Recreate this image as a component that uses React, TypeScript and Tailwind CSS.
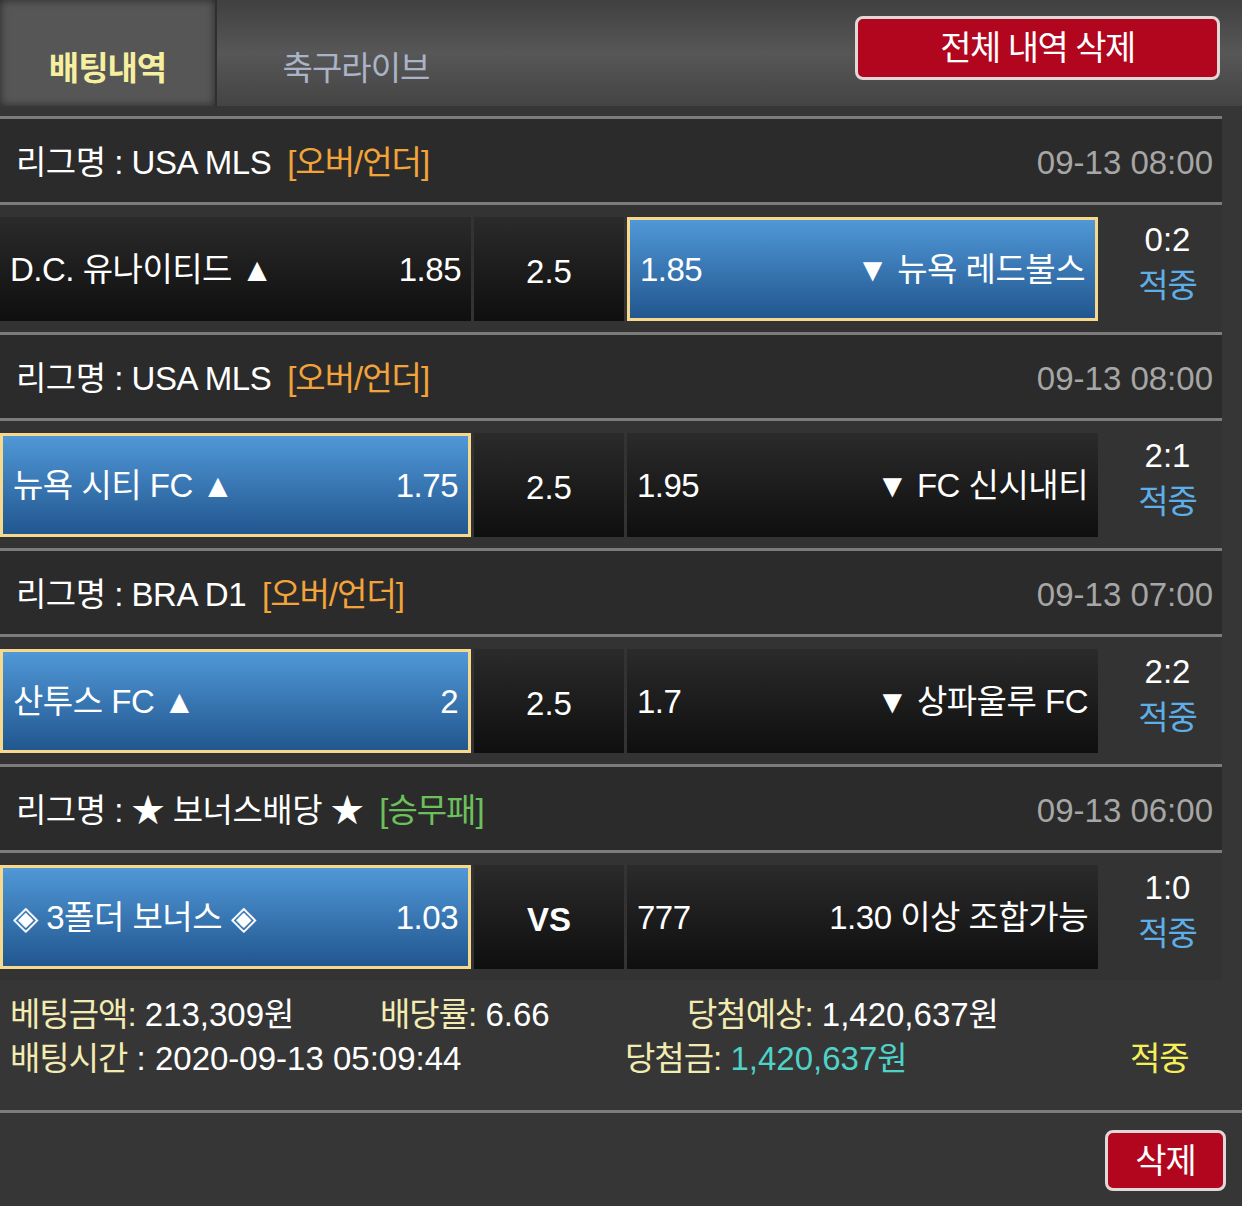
const bets = [
  {
    league: "USA MLS",
    type: "[오버/언더]",
    typeColor: "text-[#f2a43a]",
    date: "09-13 08:00",
    home: "D.C. 유나이티드 ▲",
    homeOdds: "1.85",
    mid: "2.5",
    awayOdds: "1.85",
    away: "▼ 뉴욕 레드불스",
    pick: "away",
    score: "0:2",
  },
  {
    league: "USA MLS",
    type: "[오버/언더]",
    typeColor: "text-[#f2a43a]",
    date: "09-13 08:00",
    home: "뉴욕 시티 FC ▲",
    homeOdds: "1.75",
    mid: "2.5",
    awayOdds: "1.95",
    away: "▼ FC 신시내티",
    pick: "home",
    score: "2:1",
  },
  {
    league: "BRA D1",
    type: "[오버/언더]",
    typeColor: "text-[#f2a43a]",
    date: "09-13 07:00",
    home: "산투스 FC ▲",
    homeOdds: "2",
    mid: "2.5",
    awayOdds: "1.7",
    away: "▼ 상파울루 FC",
    pick: "home",
    score: "2:2",
  },
  {
    league: "★ 보너스배당 ★",
    type: "[승무패]",
    typeColor: "text-[#6cc05c]",
    date: "09-13 06:00",
    home: "◈ 3폴더 보너스 ◈",
    homeOdds: "1.03",
    mid: "VS",
    awayOdds: "777",
    away: "1.30 이상 조합가능",
    pick: "home",
    score: "1:0",
  },
]

function Cell({ selected, left, right }: { selected: boolean; left: string; right: string }) {
  return (
    <div
      className={`w-[471px] h-[104px] flex items-center justify-between px-[10px] ${
        selected
          ? "border-[3px] border-[#f6d98c] bg-gradient-to-b from-[#5098d8] to-[#22578f]"
          : "bg-gradient-to-b from-[#2b2b2b] to-[#0f0f0f]"
      }`}
    >
      <span className="tracking-[-0.5px]">{left}</span>
      <span className="tracking-[-0.5px]">{right}</span>
    </div>
  )
}

export default function App() {
  return (
    <div className="w-[1242px] min-h-[1206px] bg-[#363636] text-white text-[33px] leading-none font-['Liberation_Sans','Noto_Sans_CJK_KR',sans-serif]">
      {/* top tabs */}
      <div className="h-[106px] flex bg-gradient-to-b from-[#404040] via-[#575757] to-[#444444]">
        <div className="w-[217px] h-full flex items-center justify-center pt-[30px] bg-[#565656] border-r-2 border-[#2f2f2f] shadow-[inset_0_0_8px_rgba(0,0,0,0.55)]">
          <span className="font-bold text-[#f4f0a0] tracking-[-1px]">배팅내역</span>
        </div>
        <div className="w-[278px] h-full flex items-center justify-center pt-[30px]">
          <span className="text-[#aab4c6] tracking-[-1px]">축구라이브</span>
        </div>
        <button className="ml-auto mr-[22px] mt-[16px] w-[365px] h-[64px] rounded-lg border-[3px] border-[#e2d8d8] bg-[#b1061e] text-[34px] tracking-[-1.5px] text-white">
          전체 내역 삭제
        </button>
      </div>

      {/* bet list */}
      <div className="mt-[10px] w-[1222px]">
        {bets.map((bet, index) => (
          <div key={index}>
            <div className="h-[89px] border-y-[3px] border-[#7c7c7c] bg-[#2b2b2b] flex items-center justify-between pt-[4px] pl-[16px] pr-[9px]">
              <div className="flex items-center">
                <span className="tracking-[-0.5px]">리그명 : {bet.league}</span>
                <span className={`ml-[16px] tracking-[-1px] ${bet.typeColor}`}>{bet.type}</span>
              </div>
              <span className="text-[#a6a6a6]">{bet.date}</span>
            </div>
            <div className="h-[127px] pt-3 flex gap-[3px] bg-[#333333]">
              <Cell selected={bet.pick === "home"} left={bet.home} right={bet.homeOdds} />
              <div className="w-[150px] h-[104px] flex items-center justify-center pt-1 bg-gradient-to-b from-[#2b2b2b] to-[#0f0f0f]">
                <span className={bet.mid === "VS" ? "font-bold" : ""}>{bet.mid}</span>
              </div>
              <Cell selected={bet.pick === "away"} left={bet.awayOdds} right={bet.away} />
              <div className="flex-1 h-[104px] pl-[12px] pb-[14px] flex flex-col items-center justify-center gap-[13px]">
                <span>{bet.score}</span>
                <span className="text-[#5eaee8] tracking-[-1px]">적중</span>
              </div>
            </div>
          </div>
        ))}
      </div>

      {/* summary */}
      <div className="h-[130px] pt-[13px] px-[10px] leading-[44px]">
        <div className="flex">
          <div className="w-[370px]">
            <span className="text-[#f2ecb2] tracking-[-1px]">베팅금액:</span> 213,309원
          </div>
          <div className="w-[307px]">
            <span className="text-[#f2ecb2] tracking-[-1px]">배당률:</span> 6.66
          </div>
          <div>
            <span className="text-[#f2ecb2] tracking-[-1px]">당첨예상:</span> 1,420,637원
          </div>
        </div>
        <div className="flex">
          <div className="w-[615px]">
            <span className="text-[#f2ecb2] tracking-[-1px]">배팅시간</span> : 2020-09-13 05:09:44
          </div>
          <div className="w-[505px]">
            <span className="text-[#f2ecb2] tracking-[-1px]">당첨금:</span> <span className="text-[#4fd2c8]">1,420,637원</span>
          </div>
          <div className="text-[#f4ee58] tracking-[-1px]">적중</div>
        </div>
      </div>

      <div className="border-t-[3px] border-[#7c7c7c] pt-[17px] pr-[16px] pb-[15px] flex justify-end">
        <button className="w-[121px] h-[61px] rounded-lg border-[3px] border-[#e2d8d8] bg-[#b1061e] text-[34px] tracking-[-1px] text-white">
          삭제
        </button>
      </div>
    </div>
  )
}
